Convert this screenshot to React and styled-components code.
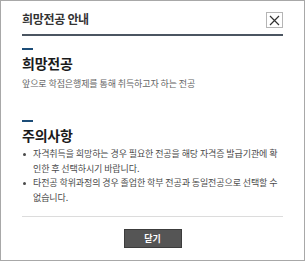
import React from "react";
import styled, { createGlobalStyle } from "styled-components";

const GlobalStyle = createGlobalStyle`
  html, body {
    margin: 0;
    padding: 0;
    background: #fff;
  }
  body {
    font-family: "Noto Sans CJK KR", "Noto Sans", sans-serif;
  }
`;

const Popup = styled.div`
  box-sizing: border-box;
  width: 305px;
  height: 261px;
  border: 1px solid #a8a8a8;
  padding: 0 21px;
  background: #fff;
  display: flex;
  flex-direction: column;
`;

const Header = styled.div`
  display: flex;
  align-items: center;
  justify-content: space-between;
  height: 33px;
  border-bottom: 2px solid #4b5561;
`;

const Title = styled.h1`
  margin: 2px 0 0;
  font-size: 12px;
  font-weight: 700;
  color: #333;
  letter-spacing: -0.3px;
`;

const CloseButton = styled.button`
  box-sizing: border-box;
  width: 17px;
  height: 16px;
  padding: 0;
  margin-top: 5px;
  border: 1px solid #b5b5b5;
  background: #fff;
  display: flex;
  align-items: center;
  justify-content: center;
  cursor: pointer;
`;

const Section = styled.section`
  margin-top: ${(p) => p.$top}px;
`;

const Mark = styled.div`
  width: 11px;
  height: 2px;
  background: #1c4d78;
`;

const Heading = styled.h2`
  margin: 2px 0 0;
  font-size: 14px;
  line-height: 22px;
  font-weight: 700;
  color: #1a1a1a;
  letter-spacing: -0.2px;
`;

const Desc = styled.p`
  margin: 4px 0 0;
  font-size: 9px;
  line-height: 12px;
  color: #666;
  letter-spacing: -0.1px;
`;

const List = styled.ul`
  margin: 1px 0 0;
  padding: 0;
  list-style: none;
`;

const Item = styled.li`
  position: relative;
  padding-left: 11px;
  font-size: 9px;
  line-height: 14.5px;
  color: #4a4a4a;
  letter-spacing: -0.1px;

  &::before {
    content: "";
    position: absolute;
    left: 1px;
    top: 6px;
    width: 3px;
    height: 3px;
    border-radius: 50%;
    background: #4a4a4a;
  }
`;

const Footer = styled.div`
  margin-top: auto;
  margin-bottom: 12px;
  border-top: 1px solid #dcdcdc;
  padding-top: 12px;
  display: flex;
  justify-content: center;
`;

const ActionButton = styled.button`
  box-sizing: border-box;
  width: 58px;
  height: 19px;
  padding: 0;
  border: 1px solid #3c3c3c;
  background: #555;
  color: #fff;
  font-family: inherit;
  font-size: 9px;
  font-weight: 700;
  cursor: pointer;
`;

export default function App() {
  return (
    <>
      <GlobalStyle />
      <Popup>
        <Header>
          <Title>희망전공 안내</Title>
          <CloseButton aria-label="닫기">
            <svg width="11" height="11" viewBox="0 0 11 11">
              <path d="M1 1L10 10M10 1L1 10" stroke="#333" strokeWidth="1.2" />
            </svg>
          </CloseButton>
        </Header>
        <Section $top={12}>
          <Mark />
          <Heading>희망전공</Heading>
          <Desc>앞으로 학점은행제를 통해 취득하고자 하는 전공</Desc>
        </Section>
        <Section $top={30}>
          <Mark />
          <Heading>주의사항</Heading>
          <List>
            <Item>
              자격취득을 희망하는 경우 필요한 전공을 해당 자격증 발급기관에 확인한 후 선택하시기 바랍니다.
            </Item>
            <Item>
              타전공 학위과정의 경우 졸업한 학부 전공과 동일전공으로 선택할 수 없습니다.
            </Item>
          </List>
        </Section>
        <Footer>
          <ActionButton>닫기</ActionButton>
        </Footer>
      </Popup>
    </>
  );
}
